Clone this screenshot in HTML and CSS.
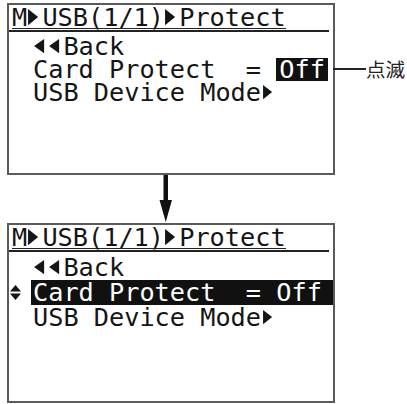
FILE: index.html
```html
<!DOCTYPE html>
<html lang="ja">
<head>
<meta charset="utf-8">
<title>USB Protect</title>
<link rel="stylesheet" href="styles.css">
</head>
<body>
<div class="page">
  <div class="lcd lcd--top">
    <div class="title"><span class="title-text">M<svg class="tri" viewBox="0 0 15 18"><path d="M1 1L11 9L1 17Z"/></svg>USB(1/1)<svg class="tri" viewBox="0 0 15 18"><path d="M1 1L11 9L1 17Z"/></svg>Protect</span></div>
    <div class="rows">
      <div class="row"><span class="cur"></span><span class="txt"><svg class="tri" viewBox="0 0 15 18"><path d="M11 2L1 9L11 16Z"/></svg><svg class="tri" viewBox="0 0 15 18"><path d="M11 2L1 9L11 16Z"/></svg>Back</span></div>
      <div class="row"><span class="cur"></span><span class="txt">Card Protect  = <span class="val">Off</span></span></div>
      <div class="row"><span class="cur"></span><span class="txt">USB Device Mode<svg class="tri" viewBox="0 0 15 18"><path d="M2 2L11 9L2 16Z"/></svg></span></div>
    </div>
    <div class="callout"><span class="leader"></span><span class="note">点滅</span></div>
  </div>

  <svg class="arrow" width="14" height="48" viewBox="0 0 14 48"><rect x="4.5" y="0" width="4.5" height="28"/><path d="M0.5 25L13 25L6.75 47Z"/></svg>

  <div class="lcd lcd--bottom">
    <div class="title"><span class="title-text">M<svg class="tri" viewBox="0 0 15 18"><path d="M1 1L11 9L1 17Z"/></svg>USB(1/1)<svg class="tri" viewBox="0 0 15 18"><path d="M1 1L11 9L1 17Z"/></svg>Protect</span></div>
    <div class="rows">
      <div class="row"><span class="cur"></span><span class="txt"><svg class="tri" viewBox="0 0 15 18"><path d="M11 2L1 9L11 16Z"/></svg><svg class="tri" viewBox="0 0 15 18"><path d="M11 2L1 9L11 16Z"/></svg>Back</span></div>
      <div class="row row--sel"><span class="cur"><svg class="updown" width="11" height="15" viewBox="0 0 11 15"><path d="M0 6.5L5.5 0L11 6.5Z"/><path d="M0 8.5L11 8.5L5.5 15Z"/></svg></span><span class="txt">Card Protect  = Off</span></div>
      <div class="row"><span class="cur"></span><span class="txt">USB Device Mode<svg class="tri" viewBox="0 0 15 18"><path d="M2 2L11 9L2 16Z"/></svg></span></div>
    </div>
  </div>
</div>
</body>
</html>
```
FILE: styles.css
```css
html, body {
  margin: 0;
  background: #fff;
  overflow: hidden;
}

body {
  font-family: "DejaVu Sans Mono", "Liberation Mono", monospace;
}

.page {
  padding: 3px 0 0 7px;
  display: flex;
  flex-direction: column;
  align-items: flex-start;
}

.lcd {
  position: relative;
  box-sizing: border-box;
  width: 328px;
  border: 2px solid #5a5a5a;
  color: #151515;
  font-size: 25.25px;
}

.lcd--top {
  height: 172px;
}

.lcd--bottom {
  height: 180px;
}

.title {
  display: flex;
  padding: 2px 0 1px 3px;
  margin-right: 4px;
  border-bottom: 2px solid #222;
}

.title-text {
  line-height: 21px;
  border-bottom: 1.5px solid #222;
  white-space: pre;
}

.rows {
  margin-top: 3px;
}

.row {
  display: flex;
  line-height: 23px;
}

.lcd--bottom .row {
  line-height: 25px;
}

.cur {
  width: 22px;
  flex: none;
  display: flex;
  align-items: center;
}

.txt {
  padding-left: 2px;
  white-space: pre;
}

.row--sel .txt {
  flex: 1;
  background: #111;
  color: #fff;
}

.val {
  display: inline-block;
  background: #111;
  color: #fff;
  padding: 0 3px;
}

.tri {
  width: 1ch;
  height: 0.72em;
  vertical-align: baseline;
  fill: currentColor;
}

.updown {
  margin-left: 1px;
  fill: #151515;
}

.callout {
  position: absolute;
  left: 100%;
  top: 53px;
  height: 22px;
  display: flex;
  align-items: center;
}

.leader {
  width: 33px;
  height: 1.5px;
  background: #222;
}

.note {
  font-family: "Noto Sans CJK JP", "Noto Sans CJK SC", sans-serif;
  font-size: 19.5px;
  line-height: 22px;
  color: #222;
  white-space: nowrap;
}

.arrow {
  display: block;
  margin-left: 152px;
  fill: #111;
}
```
